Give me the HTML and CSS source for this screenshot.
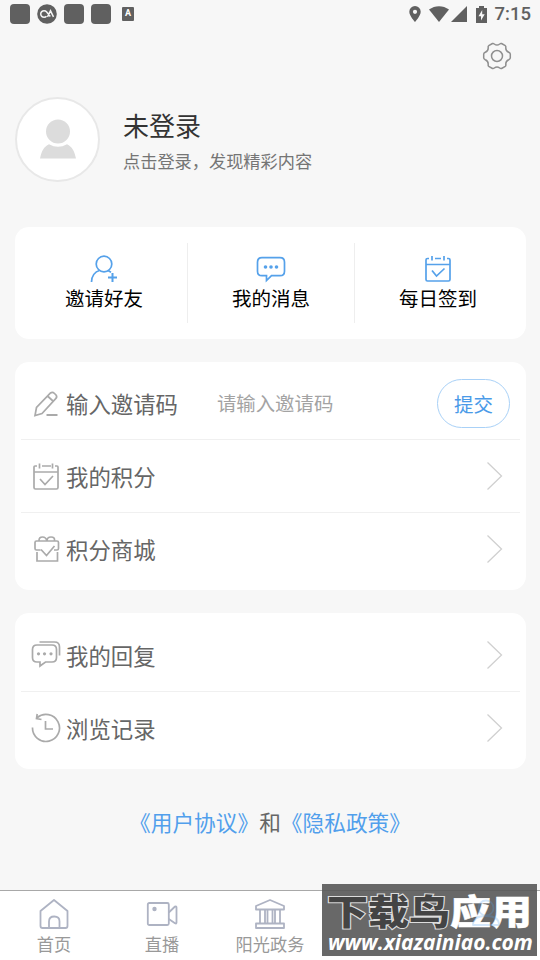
FILE: index.html
```html
<!DOCTYPE html>
<html lang="zh-CN">
<head>
<meta charset="utf-8">
<title>我的</title>
<link rel="stylesheet" href="styles.css">
</head>
<body>
<div class="app">
  <header class="status">
    <div class="status-left">
      <i class="blk"></i>
      <svg class="ca" viewBox="0 0 20 20"><circle cx="10" cy="10" r="9.8" fill="#606060"/><path d="M9.5 12.2a3.3 3.3 0 1 1 0-4.4l3.8 4.6M10.5 12.8l3-6 3 6" fill="none" stroke="#f5f5f5" stroke-width="1.5"/></svg>
      <i class="blk"></i>
      <i class="blk"></i>
      <span class="mini">A</span>
    </div>
    <div class="status-right">
      <svg width="12" height="16" viewBox="0 0 12 16"><path fill-rule="evenodd" d="M6 0a5.7 5.7 0 0 0-5.7 5.8C.3 10 6 16 6 16s5.7-6 5.7-10.200A5.700 5.700 0 0 0 6 0zm0 3.700a2.100 2.100 0 1 1 0 4.200 2.100 2.100 0 0 1 0-4.200z"/></svg>
      <svg class="wifi" width="20" height="16" viewBox="0 0 20 16"><path d="M0 3.500C6-1 14-1 20 3.500L10 16z"/></svg>
      <svg class="signal" width="16" height="16" viewBox="0 0 16 16"><path d="M16 0v16H0z"/></svg>
      <svg class="battery" width="11" height="17" viewBox="0 0 11 17"><path d="M3 0h5v2h3v15H0V2h3z"/><path d="M6.200 4L2.500 10.300H5v4.200l3.700-6.300H6.200z" fill="#f7f7f7"/></svg>
      <span class="time">7:15</span>
    </div>
  </header>

  <div class="toolbar">
    <svg width="30" height="30" viewBox="-15 -15 30 30" fill="none" stroke="#8f8f8f" stroke-width="1.500" stroke-linejoin="round"><path d="M-4.500-12.500Q-3.500-12.800-2.700-12Q0-9.800 2.700-12Q3.500-12.800 4.500-12.500L8.300-10.300Q9-9.700 8.800-8.700Q8.500-5 11.700-3.700Q13.200-3 13.300-2V2Q13.200 3 11.700 3.700Q8.500 5 8.800 8.700Q9 9.700 8.300 10.300L4.500 12.500Q3.500 12.800 2.700 12Q0 9.800-2.700 12Q-3.500 12.800-4.500 12.500L-8.300 10.300Q-9 9.700-8.800 8.700Q-8.500 5-11.700 3.700Q-13.200 3-13.300 2V-2Q-13.200-3-11.700-3.700Q-8.500-5-8.800-8.700Q-9-9.700-8.300-10.300Z"/><circle r="5.500"/></svg>
  </div>

  <section class="profile">
    <div class="avatar"><svg width="36" height="40" viewBox="0 0 36 40" fill="#dcdcdc"><circle cx="18" cy="12.500" r="12"/><path d="M0 39.500C1.500 32 4 27.500 9 25.200Q18 30.500 27 25.200C32 27.500 34.500 32 36 39.500z"/></svg></div>
    <div class="who"><div class="name">未登录</div><div class="hint">点击登录，发现精彩内容</div></div>
  </section>

  <section class="card quick">
    <div class="q"><svg width="28" height="28" viewBox="0 0 28 28"><circle cx="14" cy="9" r="7.800"/><path d="M1.500 27c0-6 3.500-10.500 8-11.500M18 15.500l3 1.700"/><path d="M22.500 18v9M18 22.500h9" stroke-width="2"/></svg><span>邀请好友</span></div>
    <div class="q mid"><svg width="30" height="28" viewBox="0 0 30 28"><path d="M6 2.700h18q4.500 0 4.500 4.500v9q0 4.500-4.500 4.500H15.500L10.500 25.500V20.700H6q-4.500 0-4.500-4.500v-9q0-4.500 4.500-4.500z"/><g class="dots"><circle cx="9.500" cy="12" r="1.800"/><circle cx="15" cy="12" r="1.800"/><circle cx="20.500" cy="12" r="1.800"/></g></svg><span>我的消息</span></div>
    <div class="q"><svg width="28" height="28" viewBox="0 0 28 28"><path d="M5 3.500H3.500Q2 3.500 2 5v19.500Q2 26 3.500 26h21q1.500 0 1.500-1.500V5q0-1.500-1.500-1.500H23M11 3.500h6M2 9.500h24M8 1v4.500M20 1v4.500M8 15.500l4.500 5.500 8-7.500"/></svg><span>每日签到</span></div>
  </section>

  <section class="card list">
    <div class="row">
      <svg class="ic" viewBox="0 0 30 30"><path d="M4 26.500l1.500-8L19.500 4q2-1.500 4 .5l1.500 1.500q1.500 2-.3 3.700L11 24.500zM16.500 7l6 5.500"/><path d="M15.500 26h11" stroke-width="2"/></svg>
      <span class="label">输入邀请码</span><span class="ph">请输入邀请码</span><button class="submit">提交</button>
    </div>
    <div class="row">
      <svg class="ic" viewBox="0 0 30 30"><path d="M6 4H4Q3 4 3 5v20.500q0 1.500 1.500 1.500h21q1.500 0 1.500-1.500V5q0-1-1-1h-2M11 4h9M3 10h24M8.500 1.500v5M21.500 1.500v5M9 17l5 5.500 8-8.500"/></svg>
      <span class="label">我的积分</span><svg class="chev" viewBox="0 0 18 30"><path d="M1.500 1.500L15.500 15 1.500 28.500"/></svg>
    </div>
    <div class="row">
      <svg class="ic" viewBox="0 0 30 30"><path d="M10 14.500l5.500 6 8-9.500M9.500 15H5.500Q4 15 4 13.500V7.500Q4 6 5.500 6h20.500Q27.500 6 27.500 7.500v6q0 1.500-1.500 1.500H23M6 17v9h20.500v-9M8 5.500Q8 2 11.500 2T16 6Q16 2 20 2T23.500 5.500"/></svg>
      <span class="label">积分商城</span><svg class="chev" viewBox="0 0 18 30"><path d="M1.500 1.500L15.500 15 1.500 28.500"/></svg>
    </div>
  </section>

  <section class="card list second">
    <div class="row">
      <svg class="ic" viewBox="0 0 30 30"><path d="M6 5h15q4.500 0 4.500 4.500v8q0 4.500-4.500 4.500H14.500L9 26v-4H6q-4.500 0-4.500-4.500v-8Q1.500 5 6 5zM8.500 2h15q5 0 5 5v8.500"/><g class="dots"><circle cx="7.500" cy="13.800" r="1.600"/><circle cx="13.500" cy="13.800" r="1.600"/><circle cx="20" cy="13.800" r="1.600"/></g></svg>
      <span class="label">我的回复</span><svg class="chev" viewBox="0 0 18 30"><path d="M1.500 1.500L15.500 15 1.500 28.500"/></svg>
    </div>
    <div class="row">
      <svg class="ic" viewBox="0 0 30 30"><path d="M1.500 14.500A13.500 13.500 0 1 0 6 4.900M6.200 1L5.500 5.500l5 1M14.500 8v8H22"/></svg>
      <span class="label">浏览记录</span><svg class="chev" viewBox="0 0 18 30"><path d="M1.500 1.500L15.500 15 1.500 28.500"/></svg>
    </div>
  </section>

  <p class="agree"><a>《用户协议》</a>和<a>《隐私政策》</a></p>

  <nav class="tabs">
    <div class="tab"><svg viewBox="0 0 32 32"><path d="M2.500 13L16 2l13.500 11v15q0 2-2 2h-23q-2 0-2-2zM11 30v-6.500q0-5 5.300-5t5.200 5V30"/></svg><span>首页</span></div>
    <div class="tab"><svg viewBox="0 0 32 32"><rect x="1.800" y="5" width="21" height="22" rx="1.500"/><path d="M22.800 14.500L29 8.500q1.500-.5 1.500 1v15q0 1.500-1.500.8L22.800 21"/><circle cx="8.500" cy="11" r="1.300" fill="#aeb3c3"/></svg><span>直播</span></div>
    <div class="tab"><svg viewBox="0 0 32 32"><path d="M16 2L2 8v3.500h28V8zM2 25.500h28v4.500H2zM6 11.500v14M11 11.500v14M13.500 11.500v14M18.500 11.500v14M21 11.500v14M26 11.500v14"/></svg><span>阳光政务</span></div>
    <div class="tab"></div>
    <div class="tab on"><svg viewBox="0 0 32 32"><circle cx="16" cy="10" r="7.500"/><path d="M3 27q0-9 13-9t13 9z"/></svg></div>
    <div class="mark"><div class="mark-title"><span>下载鸟</span>应用</div><div class="mark-url">www.xiazainiao.com</div></div>
  </nav>
</div>
</body>
</html>
```
FILE: styles.css
```css
* { box-sizing: border-box; }
body { margin: 0; background: #f7f7f7; font-family: "Noto Sans CJK SC", sans-serif; color: #666; }
.app { width: 540px; height: 960px; display: flex; flex-direction: column; overflow: hidden; }
svg { display: block; flex: none; }

.status { height: 28px; display: flex; justify-content: space-between; padding: 0 9px 0 10px; }
.status-left, .status-right { display: flex; align-items: center; }
.status-left { gap: 7px; }
.blk { width: 20px; height: 20px; border-radius: 4px; background: #606060; }
.ca { width: 20px; height: 20px; }
.mini { width: 12px; height: 14px; margin-left: 4px; background: #606060; border-radius: 1px; color: #fff; font: bold 9px/13px Roboto, sans-serif; text-align: center; }
.status-right { fill: #606060; }
.wifi { margin-left: 8px; }
.signal { margin-left: 2px; }
.battery { margin-left: 9px; }
.time { margin-left: 8px; font: 500 18.500px/28px Roboto, sans-serif; color: #606060; }

.toolbar { height: 69px; display: flex; justify-content: flex-end; padding: 13px 28px 0 0; }

.profile { display: flex; height: 130px; padding-left: 15px; }
.avatar { width: 85px; height: 85px; border: 2px solid #e8e8e8; border-radius: 50%; background: #fff; display: flex; align-items: center; justify-content: center; padding-bottom: 2px; }
.who { margin-left: 23px; padding-top: 8px; }
.name { font-size: 26px; line-height: 40px; color: #333; }
.hint { font-size: 17.200px; line-height: 26px; margin-top: 3px; color: #757575; }

.card { margin: 0 14px 0 15px; background: #fff; border-radius: 14px; flex: none; }
.quick { height: 112px; display: grid; grid-template-columns: 172px 168px 1fr; padding: 16px 0; }
.q { display: flex; flex-direction: column; align-items: center; padding-top: 12px; font-size: 19.500px; line-height: 28px; color: #000; }
.q:first-child { padding-left: 6px; }
.q:last-child { padding-right: 5px; }
.mid { border: solid #eee; border-width: 0 1px; }
.q svg { fill: none; stroke: #55a1ea; stroke-width: 1.700; }
.q span { margin-top: 1px; }
.dots { fill: currentColor; stroke: none; }
.q .dots { color: #55a1ea; }

.list { margin-top: 23px; height: 228px; padding: 5px 6px 0; }
.second { height: 156px; padding-top: 6px; }
.row { height: 73px; border-bottom: 1px solid #f0f0f0; display: flex; align-items: center; padding: 0 10px; color: #aaa; }
.row:last-child { border-bottom-color: transparent; }
.ic { width: 30px; height: 30px; margin-top: 2px; fill: none; stroke: #aaa; stroke-width: 1.700; }
.second .ic { margin-top: 0; }
.label { margin-left: 5px; font-size: 22.400px; line-height: 32px; color: #666; }
.second .label { margin-top: -1px; }
.ph { margin-left: 39px; font-size: 19.400px; line-height: 28px; color: #a3a3a3; }
.submit { margin-left: auto; width: 73px; height: 49px; border: 1.500px solid #a9d1f7; border-radius: 25px; background: #fff; color: #4a9ae8; font: 19.500px/28px "Noto Sans CJK SC", sans-serif; padding: 2px 0 0; }
.chev { width: 18px; height: 30px; margin: 0 6px 0 auto; fill: none; stroke: #d0d0d0; stroke-width: 1.300; }

.agree { margin: 36px 0 0; height: 34px; line-height: 34px; font-size: 21.700px; text-align: center; white-space: nowrap; }
.agree a { color: #519fec; }

.tabs { position: relative; margin-top: auto; flex: none; height: 70px; border-top: 1px solid #a8a8a8; background: #fff; display: grid; grid-template-columns: repeat(5, 1fr); }
.tab { display: flex; flex-direction: column; align-items: center; padding-top: 7px; font-size: 17.200px; line-height: 26px; color: #999; }
.tab svg { width: 32px; height: 32px; fill: none; stroke: #aeb3c3; stroke-width: 1.800; stroke-linejoin: round; }
.tab span { margin-top: 1px; }
.on svg { position: relative; z-index: 1; stroke: #519fec; opacity: .25; }
.mark { position: absolute; left: 322px; top: -7px; width: 215px; height: 72px; background: rgba(88, 88, 88, .9); white-space: nowrap; color: #fff; }
.mark-title { margin-left: 5px; padding-top: 6px; height: 46px; font-size: 41px; line-height: 40px; font-weight: 900; transform: scaleY(.86); -webkit-text-stroke: .5px #fff; }
.mark-title span { color: #444; -webkit-text-stroke: 2.500px #ddd; paint-order: stroke fill; }
.mark-url { padding: 1px 0 0 6px; font: italic bold 21px/22px "Open Sans", sans-serif; }
```
